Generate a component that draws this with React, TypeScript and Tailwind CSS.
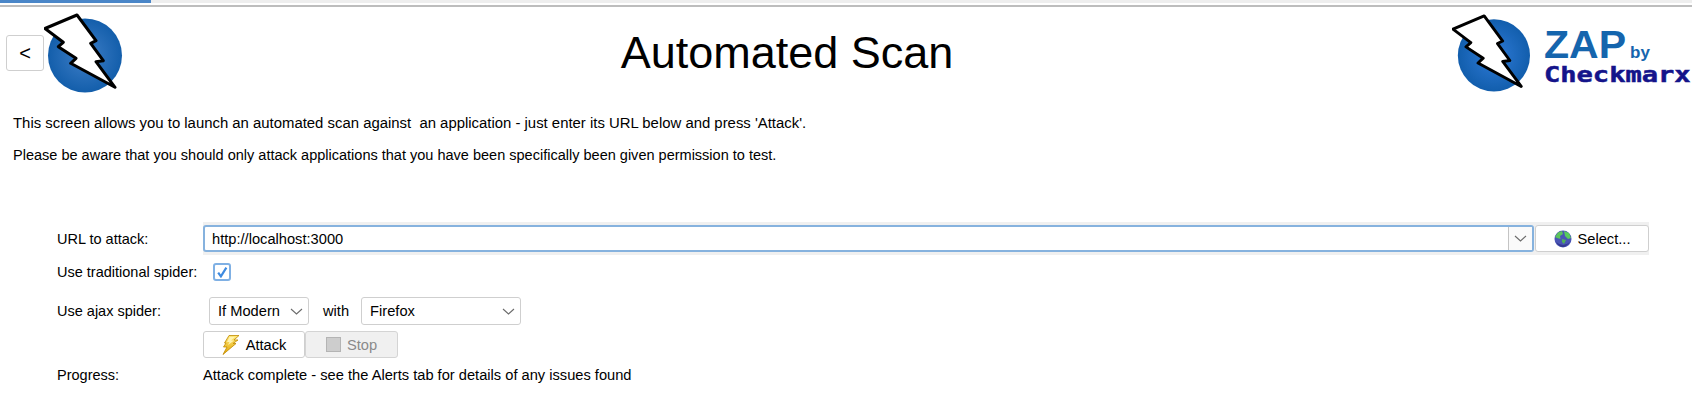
import React from "react";

function Bolt({ w, h, id, cx, center }: { w: number; h: number; id: string; cx: number; center: string }) {
  return (
    <svg width={w} height={h} viewBox="0 0 80 80" className="block shrink-0">
      <defs>
        <radialGradient id={id} cx="50%" cy="50%" r="55%">
          <stop offset="0%" stopColor={center} />
          <stop offset="100%" stopColor="#0f5ba8" />
        </radialGradient>
      </defs>
      <circle cx={cx} cy="42.5" r="37" fill={`url(#${id})`} />
      <path
        d="M1 15.5 L33 2 L52 27.7 L46.7 30.3 L59.3 47.7 L52 48.7 L71 74.3 L26.7 50.3 L32 45.3 L14.3 33.7 L19.3 29.3 Z"
        fill="#fff"
        stroke="#000"
        strokeWidth="3"
        strokeLinejoin="round"
      />
    </svg>
  );
}

function Chevron() {
  return (
    <svg width="13" height="7" viewBox="0 0 13 7">
      <path d="M1 1 L6.5 6 L12 1" fill="none" stroke="#6b6b6b" strokeWidth="1.1" />
    </svg>
  );
}

function Globe() {
  return (
    <svg width="18" height="18" viewBox="0 0 18 18">
      <circle cx="9" cy="9" r="8.5" fill="#4a55b5" />
      <path d="M4 2.5 L8 1 L9 4 L6 6 L6.5 9 L3 8 L1 7 Z" fill="#5cc45c" />
      <path d="M10 1 L15 3 L17 8 L14 9 L11 6 Z" fill="#58cc5c" />
      <path d="M8 9 L12 10 L10 14 L8 12 Z" fill="#4fb058" />
      <path d="M2 12 Q9 18 16 12 Q12 17 9 17 Q5 17 2 12 Z" fill="#33398f" />
    </svg>
  );
}

function Flash() {
  return (
    <svg width="18" height="20" viewBox="0 0 18 20">
      <defs>
        <linearGradient id="fl" x1="0" y1="0" x2="0" y2="1">
          <stop offset="0%" stopColor="#ffe97a" />
          <stop offset="100%" stopColor="#e2a400" />
        </linearGradient>
      </defs>
      <path
        d="M7 0.5 L17 0.5 L12 5 L16 5 L11 8.5 L14 8.5 L1 19.5 L5 12 L1.5 12 L4 8 L2.5 8 Z"
        fill="url(#fl)"
        stroke="#c08a00"
        strokeWidth="0.8"
        strokeLinejoin="round"
      />
      <path d="M7.5 2 L13 2 L9 5.5 L12 5.5 L6 10 L7.5 7 L5 7 Z" fill="#fff3b0" />
    </svg>
  );
}

export default function App() {
  const label = "w-[146px] shrink-0 pl-[57px] box-content text-[14.5px]";
  return (
    <div className="w-[1692px] h-[410px] bg-white overflow-hidden text-black font-['Liberation_Sans',Arial,sans-serif] text-[14.67px] leading-4">
      {/* top strip */}
      <div className="h-[3px] bg-[#eeeeee] flex">
        <div className="w-[151px] bg-[#4a86c8]" />
      </div>
      <div className="h-[2px] bg-white" />
      <div className="h-[2px] bg-[#bdbdbd]" />

      {/* header */}
      <div className="h-[108px] flex items-start">
        <div className="flex items-start pl-[6px]">
          <button className="mt-[28px] w-[38px] h-[36px] rounded-[3px] border border-[#cfcfcf] bg-white flex items-center justify-center text-[20px]">
            &lt;
          </button>
          <div className="mt-[6px]">
            <Bolt w={80} h={80} id="ballL" cx={41} center="#3f7fc8" />
          </div>
        </div>
        <div className="flex-1 text-center text-[45px] leading-[52px] pt-[20px] pr-[2px]">Automated Scan</div>
        <div className="flex items-start w-[240px] mt-[6px] shrink-0">
          <Bolt w={78} h={80} id="ballR" cx={43} center="#2f7bd8" />
          <div className="ml-[14px] mt-[16px] w-[148px] shrink-0">
            <div className="flex items-baseline h-[33px] whitespace-nowrap">
              <span className="text-[#1565ad] font-bold text-[38px] leading-[33px] scale-x-[1.08] origin-left inline-block w-[86px]">ZAP</span>
              <span className="text-[#1565ad] font-bold text-[17px] leading-[16px]">by</span>
            </div>
            <div className="text-[#14148a] font-bold text-[22px] leading-[20px] mt-[3px] font-['DejaVu_Sans_Mono',monospace] whitespace-nowrap scale-x-[1.23] origin-left [-webkit-text-stroke:0.5px_#14148a]">
              Checkmarx
            </div>
          </div>
        </div>
      </div>

      {/* intro */}
      <div className="pl-[13px] leading-4">
        <p className="text-[14.9px]">This screen allows you to launch an automated scan against&nbsp; an application - just enter its URL below and press 'Attack'.</p>
        <p className="mt-[16px] text-[14.53px]">Please be aware that you should only attack applications that you have been specifically been given permission to test.</p>
      </div>

      {/* form */}
      <div className="mt-[59px]">
        {/* URL */}
        <div className="flex items-center h-[33px]">
          <div className={label}>URL to attack:</div>
          <div className="w-[1446px] h-[33px] flex bg-[#f0f0f0] py-[3px]">
            <div className="flex-1 flex items-stretch border-2 border-[#86b2de] rounded-[3px] bg-white">
              <div className="flex-1 pl-[7px] flex items-center">http://localhost:3000</div>
              <div className="w-[24px] border-l border-[#c4c4c4] bg-[#fafafa] flex items-center justify-center">
                <Chevron />
              </div>
            </div>
            <button className="w-[114px] ml-[1px] flex items-center justify-center gap-[6px] bg-white border border-[#cfcfcf] rounded-[3px] shrink-0">
              <Globe />
              <span>Select...</span>
            </button>
          </div>
        </div>

        {/* traditional spider */}
        <div className="flex items-center h-[26px] mt-[4px]">
          <div className={label}>Use traditional spider:</div>
          <div className="ml-[10px] w-[18px] h-[18px] border-2 border-[#7fb0e4] rounded-[3px] flex items-center justify-center bg-white">
            <svg width="12" height="12" viewBox="0 0 11 11">
              <path d="M2 6 L4.5 9.5 L9.5 1.5" fill="none" stroke="#3d8ae0" strokeWidth="2" />
            </svg>
          </div>
        </div>

        {/* ajax spider */}
        <div className="flex items-center h-[28px] mt-[12px]">
          <div className={label}>Use ajax spider:</div>
          <div className="ml-[6px] w-[100px] h-[28px] border border-[#cfcfcf] rounded-[3px] flex items-center justify-between pl-[8px] pr-[5px]">
            <span>If Modern</span>
            <Chevron />
          </div>
          <span className="ml-[14px]">with</span>
          <div className="ml-[12px] w-[160px] h-[28px] border border-[#cfcfcf] rounded-[3px] flex items-center justify-between pl-[8px] pr-[5px]">
            <span>Firefox</span>
            <Chevron />
          </div>
        </div>

        {/* buttons */}
        <div className="flex h-[27px] mt-[6px] pl-[203px] items-stretch">
          <button className="w-[102px] flex items-center justify-center gap-[6px] bg-white border border-[#cfcfcf] rounded-[3px]">
            <Flash />
            <span>Attack</span>
          </button>
          <button className="w-[93px] flex items-center justify-center gap-[6px] bg-[#f0f0f0] border border-[#d4d4d4] rounded-[3px] text-[#8a8a8a]">
            <span className="w-[15px] h-[15px] bg-[#cdcdcd] border border-[#b4b4b4]" />
            <span>Stop</span>
          </button>
        </div>

        {/* progress */}
        <div className="flex items-center h-[16px] mt-[9px]">
          <div className={label}>Progress:</div>
          <div>Attack complete - see the Alerts tab for details of any issues found</div>
        </div>
      </div>
    </div>
  );
}
